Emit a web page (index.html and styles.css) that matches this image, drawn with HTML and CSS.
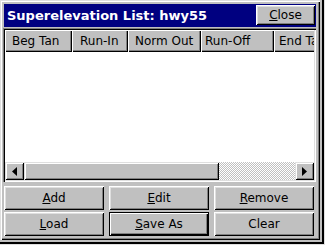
FILE: index.html
```html
<!DOCTYPE html>
<html lang="en">
<head>
    <meta charset="UTF-8">
    <title>Superelevation List</title>
    <link rel="stylesheet" href="styles.css">
</head>
<body>
    <div class="screen">
        <div class="dialog">
            <div class="titlebar">
                <span class="title">Superelevation List: hwy55</span>
                <button class="btn close-btn"><u>C</u>lose</button>
            </div>

            <div class="listview">
                <div class="header">
                    <div class="col col-beg">Beg Tan</div>
                    <div class="col col-in">Run-In</div>
                    <div class="col col-norm">Norm Out</div>
                    <div class="col col-off">Run-Off</div>
                    <div class="col col-end">End Ta</div>
                </div>
                <div class="rows"></div>
                <div class="hscroll">
                    <div class="arrow">
                        <svg width="5" height="9" viewBox="0 0 5 9"><path d="M5 0 L0 4.5 L5 9 Z" fill="#000"/></svg>
                    </div>
                    <div class="thumb"></div>
                    <div class="track"></div>
                    <div class="arrow">
                        <svg width="5" height="9" viewBox="0 0 5 9"><path d="M0 0 L5 4.5 L0 9 Z" fill="#000"/></svg>
                    </div>
                </div>
            </div>

            <div class="actions">
                <button class="btn"><u>A</u>dd</button>
                <button class="btn"><u>E</u>dit</button>
                <button class="btn"><u>R</u>emove</button>
                <button class="btn"><u>L</u>oad</button>
                <button class="btn default"><u>S</u>ave As</button>
                <button class="btn">Clear</button>
            </div>
        </div>
    </div>
</body>
</html>
```

FILE: styles.css
```css
body {
    margin: 0;
    background: #c0c0c0;
    font-family: "DejaVu Sans", Tahoma, sans-serif;
    font-size: 12px;
}

.screen {
    width: 325px;
    height: 245px;
    box-sizing: border-box;
    padding: 0 5px 5px 0;
    background: #c0c0c0;
    box-shadow: inset -1px -1px #dfdfdf, inset -3px -3px #000;
}

.dialog {
    width: 320px;
    height: 240px;
    box-sizing: border-box;
    padding: 4px;
    display: flex;
    flex-direction: column;
    background: #c0c0c0;
    box-shadow: inset 1px 1px #dfdfdf, inset 2px 2px #fff,
                inset -1px -1px #000, inset -2px -2px #808080;
}

/* title */
.titlebar {
    height: 23px;
    background: #000080;
    display: flex;
    align-items: center;
    justify-content: space-between;
    padding: 0 1px 0 3px;
}

.title {
    color: #fff;
    font-weight: bold;
    font-size: 13px;
}

.btn {
    font-family: inherit;
    font-size: 12px;
    color: #000;
    background: #c0c0c0;
    border: none;
    padding: 0;
    margin: 0;
    box-shadow: inset 1px 1px #fff, inset -1px -1px #000,
                inset 2px 2px #dfdfdf, inset -2px -2px #808080;
}

.close-btn {
    width: 59px;
    height: 20px;
}

/* list */
.listview {
    margin-top: 1px;
    height: 155px;
    box-sizing: border-box;
    margin-left: -1px;
    padding: 2px;
    display: flex;
    flex-direction: column;
    background: #fff;
    box-shadow: inset 1px 1px #808080, inset 2px 2px #000,
                inset -1px -1px #fff, inset -2px -2px #dfdfdf;
}

.header {
    display: flex;
    height: 22px;
    overflow: hidden;
    white-space: nowrap;
}

.col {
    flex: none;
    box-sizing: border-box;
    padding-left: 7px;
    line-height: 22px;
    background: #c0c0c0;
    box-shadow: inset 1px 1px #fff, inset -1px -1px #000, inset -2px -2px #808080;
}

.col-beg { width: 67px; }
.col-in { width: 56px; padding-left: 8px; }
.col-norm { width: 73px; }
.col-off { width: 73px; padding-left: 4px; }
.col-end { width: 43px; padding-left: 5px; overflow: hidden; }

.rows {
    flex: 1;
}

.hscroll {
    height: 18px;
    display: flex;
}

.arrow {
    width: 19px;
    display: flex;
    align-items: center;
    justify-content: center;
    background: #c0c0c0;
    box-shadow: inset 1px 1px #dfdfdf, inset -1px -1px #000,
                inset 2px 2px #fff, inset -2px -2px #808080;
}

.thumb {
    width: 195px;
    background: #c0c0c0;
    box-shadow: inset 1px 1px #dfdfdf, inset -1px -1px #000,
                inset 2px 2px #fff, inset -2px -2px #808080;
}

.track {
    flex: 1;
    background: repeating-conic-gradient(#fff 0 25%, #c0c0c0 0 50%) 0 0 / 2px 2px;
}

/* buttons */
.actions {
    margin-top: 4px;
    display: grid;
    grid-template-columns: repeat(3, 100px);
    grid-auto-rows: 24px;
    column-gap: 5px;
    row-gap: 2px;
}

.btn.default {
    box-shadow: inset 1px 1px #000, inset -1px -1px #000,
                inset 2px 2px #fff, inset -2px -2px #000,
                inset -3px -3px #808080;
}
```
